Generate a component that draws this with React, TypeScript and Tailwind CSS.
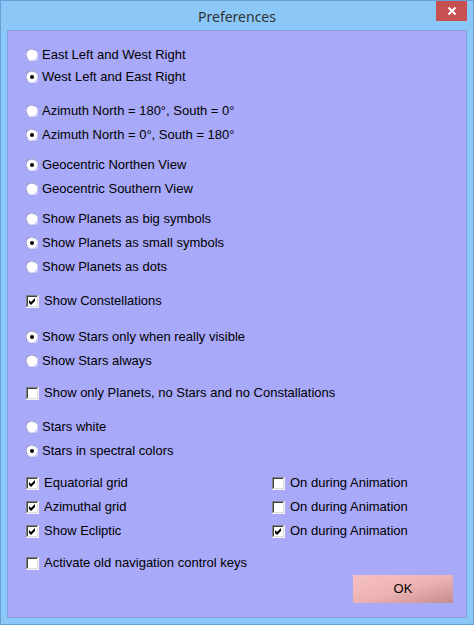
const FONT = { fontFamily: '"Liberation Sans", Arial, sans-serif' }

function Radio({ on }: { on?: boolean }) {
  return (
    <svg width="12" height="12" viewBox="0 0 12 12" className="shrink-0">
      <circle cx="6" cy="6" r="5.5" fill="#ffffff" />
      <path d="M1.2 9 A5.3 5.3 0 0 1 9 1.2" fill="none" stroke="#9a9a9a" strokeWidth="1" />
      <path d="M10.8 3 A5.3 5.3 0 0 1 3 10.8" fill="none" stroke="#e8e8e8" strokeWidth="1" />
      {on && <circle cx="6" cy="6" r="2" fill="#000000" />}
    </svg>
  )
}

function Check({ on }: { on?: boolean }) {
  return (
    <svg width="13" height="13" viewBox="0 0 13 13" className="shrink-0">
      <rect x="0" y="0" width="13" height="13" fill="#f2f2f2" />
      <rect x="0" y="0" width="12" height="12" fill="#808080" />
      <rect x="1" y="1" width="11" height="11" fill="#dcdcdc" />
      <rect x="1" y="1" width="10" height="10" fill="#404040" />
      <rect x="2" y="2" width="9" height="9" fill="#ffffff" />
      {on && <polygon points="3,5 5,7 9,3 9,6 5,10 3,8" fill="#000000" />}
    </svg>
  )
}

function Row({ kind, on, label, mt }: { kind: 'r' | 'c'; on?: boolean; label: string; mt: string }) {
  return (
    <div className={`flex items-center h-[22px] ${mt}`}>
      {kind === 'r' ? <Radio on={on} /> : <Check on={on} />}
      <span className={`text-[13px] text-black ${kind === 'r' ? 'ml-[4px]' : 'ml-[5px]'}`}>{label}</span>
    </div>
  )
}

function GridRow({ label, left, right, mt }: { label: string; left: boolean; right: boolean; mt: string }) {
  return (
    <div className={`flex items-center h-[22px] ${mt}`}>
      <div className="flex items-center w-[246px]">
        <Check on={left} />
        <span className="text-[13px] text-black ml-[5px]">{label}</span>
      </div>
      <Check on={right} />
      <span className="text-[13px] text-black ml-[5px]">On during Animation</span>
    </div>
  )
}

export default function App() {
  return (
    <div className="w-[474px] h-[625px] bg-[#8bc8f8] border border-[#6a9fd6] flex flex-col" style={FONT}>
      <div className="relative h-[29px] shrink-0 flex items-center justify-center">
        <span className="text-[14px] text-[#333333] mt-[2px]" style={{ fontFamily: '"Noto Sans", "Open Sans", sans-serif' }}>Preferences</span>
        <div className="absolute right-[6px] top-0 w-[31px] h-[20px] bg-[#c75050] flex items-center justify-center">
          <svg width="10" height="10" viewBox="0 0 10 10">
            <path d="M1.5 1.5 L8.5 8.5 M8.5 1.5 L1.5 8.5" stroke="#ffffff" strokeWidth="2" />
          </svg>
        </div>
      </div>

      <div className="mx-[6px] mb-[6px] flex-1 bg-[#a9a9fa] border border-[#7ea2dc] pl-[18px] pt-[13px] flex flex-col">
        <Row kind="r" label="East Left and West Right" mt="mt-0" />
        <Row kind="r" on label="West Left and East Right" mt="mt-0" />

        <Row kind="r" label="Azimuth North = 180°, South = 0°" mt="mt-[12px]" />
        <Row kind="r" on label="Azimuth North = 0°, South = 180°" mt="mt-[2px]" />

        <Row kind="r" on label="Geocentric Northen View" mt="mt-[8px]" />
        <Row kind="r" label="Geocentric Southern View" mt="mt-[2px]" />

        <Row kind="r" label="Show Planets as big symbols" mt="mt-[8px]" />
        <Row kind="r" on label="Show Planets as small symbols" mt="mt-[2px]" />
        <Row kind="r" label="Show Planets as dots" mt="mt-[2px]" />

        <Row kind="c" on label="Show Constellations" mt="mt-[12px]" />

        <Row kind="r" on label="Show Stars only when really visible" mt="mt-[14px]" />
        <Row kind="r" label="Show Stars always" mt="mt-[2px]" />

        <Row kind="c" label="Show only Planets, no Stars and no Constallations" mt="mt-[10px]" />

        <Row kind="r" label="Stars white" mt="mt-[12px]" />
        <Row kind="r" on label="Stars in spectral colors" mt="mt-[2px]" />

        <GridRow label="Equatorial grid" left right={false} mt="mt-[10px]" />
        <GridRow label="Azimuthal grid" left right={false} mt="mt-[2px]" />
        <GridRow label="Show Ecliptic" left right mt="mt-[2px]" />

        <Row kind="c" label="Activate old navigation control keys" mt="mt-[10px]" />

        <div className="flex justify-end pr-[13px] mt-[1px]">
          <button className="w-[100px] h-[28px] bg-linear-to-br from-[#f6c0c0] via-[#edb3b3] to-[#c48e8e] text-[13px] text-black">
            OK
          </button>
        </div>
      </div>
    </div>
  )
}
